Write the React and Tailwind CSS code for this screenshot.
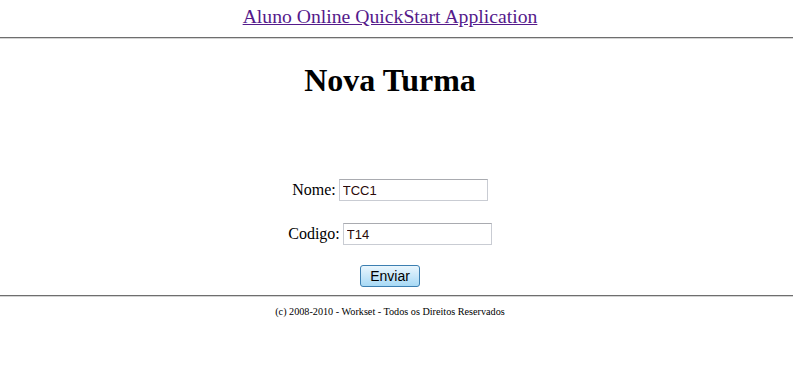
import React from 'react';

const App = () => {
  return (
    <div className="w-[793px] h-[376px] bg-white text-black" style={{ fontFamily: '"Liberation Serif", "Times New Roman", serif' }}>
      {/* Header */}
      <div className="w-[780px] h-[37px] flex items-start justify-center pt-[5px]">
        <a href="#" className="text-[19.7px] leading-[23px] text-[#551a8b] underline">
          Aluno Online QuickStart Application
        </a>
      </div>
      <div className="h-[2px] border-t border-t-[#6e6e6e] border-b border-b-[#d4d4d4]"></div>

      {/* Content */}
      <div className="w-[780px] h-[256px] flex flex-col items-center">
        <h1 className="mt-[23px] text-[32px] leading-[37px] font-bold">Nova Turma</h1>

        <div className="mt-[79px] flex items-center gap-[3px] text-[16px]">
          <span>Nome:</span>
          <input
            defaultValue="TCC1"
            className="w-[149px] h-[22px] border border-[#c9ccd3] border-t-[#a9abb0] px-[3px] text-[13px] text-[#2b0a0a] outline-none"
            style={{ fontFamily: '"Liberation Sans", Arial, sans-serif' }}
          />
        </div>

        <div className="mt-[20px] flex items-center gap-[3px] text-[16px]">
          <span>Codigo:</span>
          <input
            defaultValue="T14"
            className="w-[149px] h-[22px] border border-[#c9ccd3] border-t-[#a9abb0] px-[3px] text-[13px] text-[#2b0a0a] outline-none"
            style={{ fontFamily: '"Liberation Sans", Arial, sans-serif' }}
          />
        </div>

        <button
          className="mt-[19px] w-[60px] h-[22px] rounded-[3px] border border-[#3c7fb1] bg-gradient-to-b from-[#eaf6fd] to-[#a7d9f5] text-[14px] leading-[20px] text-black"
          style={{ fontFamily: '"Liberation Sans", Arial, sans-serif' }}
        >
          Enviar
        </button>
      </div>

      <div className="h-[2px] border-t border-t-[#6e6e6e] border-b border-b-[#d4d4d4]"></div>

      {/* Footer */}
      <div className="w-[780px] pt-[9px] text-center text-[10.2px] leading-[12px]">
        (c) 2008-2010 - Workset - Todos os Direitos Reservados
      </div>
    </div>
  );
};

export default App;
